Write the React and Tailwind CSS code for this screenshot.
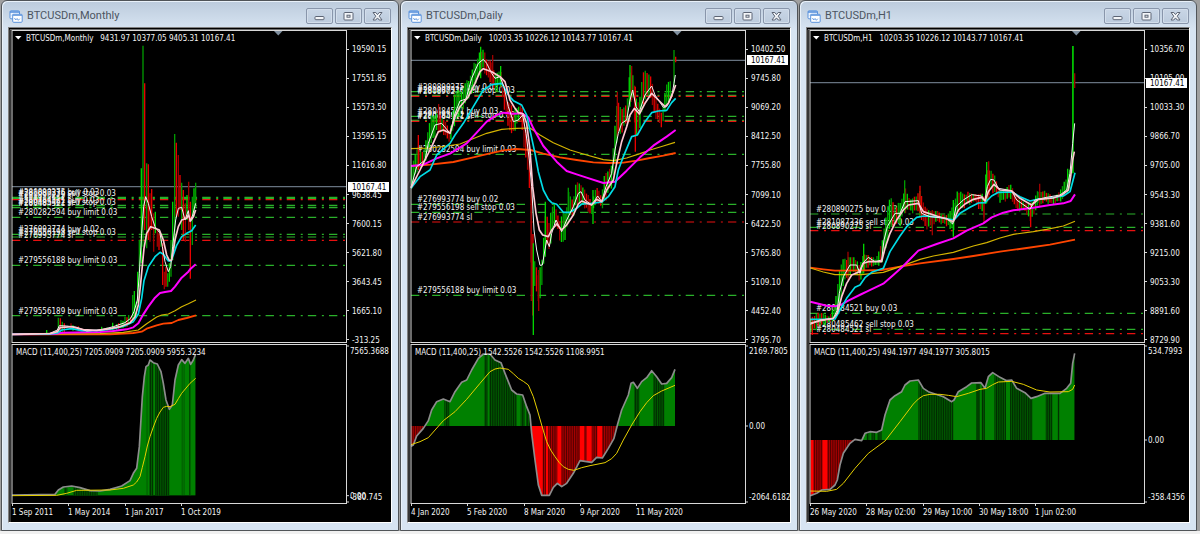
import { useId } from 'react';

// Traced points are stored in thirds of a pixel.
const UNIT = 1 / 3;

const COLORS = {
    green: '#2ab02a',
    red: '#e81010',
};

const BAR_COLORS = {
    up: ['#00d400', '#009a00'],
    down: ['#e80000', '#9b0000'],
};

const GRID_X = [12, 68, 125, 181, 237];

const CHARTS = [
    {
        id: 'monthly',
        title: 'BTCUSDm,Monthly',
        quote: '9431.97 10377.05 9405.31 10167.41',
        shift: 0,
        price: { y: 560, value: '10167.41' },
        scale: ['19590.15', '17551.85', '15573.50', '13595.15', '11616.80', '9638.45', '7600.15', '5621.80', '3643.45', '1665.10', '-313.25'],
        dates: ['1 Sep 2011', '1 May 2014', '1 Jan 2017', '1 Oct 2019'],
        orders: [
            { y: 592, label: '#280890275 buy 0.03', color: 'green' },
            { y: 595, label: '#281087336 sell stop 0.03', color: 'green' },
            { y: 599, label: '#280890275 sl', color: 'red' },
            { y: 616, label: '#280484521 buy 0.03', color: 'green' },
            { y: 622, label: '#280485462 sell stop 0.03', color: 'green' },
            { y: 623, label: '#280484521 sl', color: 'green' },
            { y: 652, label: '#280282594 buy limit 0.03', color: 'green' },
            { y: 703, label: '#276993774 buy 0.02', color: 'green' },
            { y: 711, label: '#279556198 sell stop 0.03', color: 'green' },
            { y: 721, label: '#276993774 sl', color: 'red' },
            { y: 796, label: '#279556188 buy limit 0.03', color: 'green' },
            { y: 947, label: '#279556189 buy limit 0.03', color: 'green' },
        ],
        bars: [
            [140, 990, 1003, 'up'], [175, 953, 1000, 'up'], [181, 955, 1000, 'down'], [187, 965, 1000, 'up'], [193, 970, 998, 'down'],
            [213, 970, 988, 'down'], [219, 976, 992, 'up'], [235, 978, 994, 'down'], [305, 980, 995, 'up'], [321, 982, 994, 'up'],
            [338, 968, 992, 'up'], [350, 972, 990, 'up'], [356, 970, 988, 'down'], [363, 960, 985, 'up'], [369, 962, 984, 'up'],
            [375, 950, 980, 'up'], [381, 952, 980, 'down'], [386, 945, 975, 'up'], [392, 950, 970, 'down'], [398, 885, 965, 'up'],
            [403, 873, 960, 'up'], [409, 905, 950, 'up'], [413, 815, 910, 'up'], [418, 720, 860, 'up'], [424, 505, 790, 'up'],
            [429, 137, 740, 'up'], [434, 250, 690, 'down'], [440, 490, 745, 'up'], [445, 493, 720, 'down'], [450, 580, 725, 'down'],
            [455, 567, 690, 'down'], [461, 640, 755, 'down'], [466, 635, 700, 'up'], [472, 690, 740, 'down'], [477, 700, 750, 'down'],
            [483, 700, 740, 'up'], [488, 730, 855, 'down'], [493, 815, 868, 'down'], [498, 800, 860, 'down'], [503, 820, 860, 'up'],
            [508, 790, 845, 'up'], [513, 720, 830, 'up'], [518, 605, 780, 'up'], [524, 402, 745, 'up'], [529, 428, 650, 'down'],
            [535, 465, 650, 'down'], [540, 525, 630, 'down'], [545, 548, 690, 'up'], [550, 570, 720, 'down'], [556, 610, 725, 'down'],
            [561, 585, 660, 'up'], [566, 545, 690, 'down'], [571, 605, 836, 'down'], [577, 590, 735, 'up'], [582, 565, 650, 'up'],
            [587, 548, 620, 'up'],
        ],
        averages: {
            white: '36,1003 150,1000 172,990 178,977 200,978 230,982 260,993 300,990 340,980 375,968 392,955 402,935 412,900 418,820 425,700 431,620 437,590 445,610 455,650 465,680 480,700 487,740 495,785 505,815 512,800 518,740 527,660 535,625 545,622 555,660 565,632 570,665 578,645 587,610',
            pink: '36,1003 150,1001 172,995 180,983 215,980 250,989 290,991 330,986 360,980 390,968 405,950 415,915 422,850 432,745 440,700 452,680 465,685 478,690 490,720 500,765 508,781 515,780 525,720 535,680 545,660 560,655 565,645 572,662 580,650 587,630',
            cyan: '36,1003 150,1002 172,999 185,990 215,986 245,992 300,991 340,986 375,977 400,965 415,942 425,895 432,842 445,800 455,785 465,770 480,757 490,763 505,783 513,783 520,765 530,736 545,710 560,700 575,692 587,675',
            magenta: '36,1003 160,1002 190,998 300,996 340,993 380,988 400,982 415,970 430,943 445,920 465,893 480,879 495,876 513,873 525,860 545,833 565,815 572,806 587,793',
            yellow: '36,1003 300,1001 370,997 415,990 440,971 470,951 485,945 505,942 525,932 545,920 565,911 588,900',
            orange: '36,1003 330,1003 400,999 425,995 440,986 470,976 490,971 515,969 535,960 560,954 588,946',
        },
        macd: {
            text: 'MACD (11,400,25) 7205.0909 7205.0909 5955.3234',
            max: '7565.3688',
            min: '-380.745',
            zero: 1487,
            outline: '36,1485 165,1483 175,1470 190,1461 215,1458 240,1463 270,1472 300,1473 330,1468 365,1458 390,1442 400,1420 410,1405 418,1340 427,1190 433,1130 438,1100 445,1095 450,1080 460,1088 472,1092 483,1115 490,1150 498,1200 508,1228 517,1215 525,1140 535,1095 545,1079 555,1090 565,1075 572,1093 580,1080 587,1062',
            signal: '36,1487 170,1486 200,1480 230,1471 330,1470 370,1465 400,1455 410,1446 420,1430 427,1402 435,1370 442,1338 450,1310 460,1281 470,1255 480,1236 490,1222 500,1219 510,1220 525,1213 535,1196 545,1180 570,1150 587,1135',
            falling: [[193, 202], [220, 293], [440, 442], [448, 460], [465, 508], [545, 547], [551, 553], [568, 572]],
        },
    },
    {
        id: 'daily',
        title: 'BTCUSDm,Daily',
        quote: '10203.35 10226.12 10143.77 10167.41',
        shift: 3,
        price: { y: 181, value: '10167.41' },
        scale: ['10402.50', '9745.80', '9069.20', '8412.50', '7755.80', '7099.10', '6422.50', '5765.80', '5109.10', '4452.40', '3795.70'],
        dates: ['4 Jan 2020', '5 Feb 2020', '8 Mar 2020', '9 Apr 2020', '11 May 2020'],
        orders: [
            { y: 275, label: '#280890275 buy 0.03', color: 'green' },
            { y: 286, label: '#281087336 sell stop 0.03', color: 'green' },
            { y: 289, label: '#280890275 sl', color: 'red' },
            { y: 349, label: '#280484521 buy 0.03', color: 'green' },
            { y: 361, label: '#280485462 sell stop 0.03', color: 'green' },
            { y: 364, label: '#280484521 sl', color: 'red' },
            { y: 463, label: '#280282594 buy limit 0.03', color: 'green' },
            { y: 613, label: '#276993774 buy 0.02', color: 'green' },
            { y: 637, label: '#279556198 sell stop 0.03', color: 'green' },
            { y: 666, label: '#276993774 sl', color: 'red' },
            { y: 886, label: '#279556188 buy limit 0.03', color: 'green' },
        ],
        range: [
            [35, 490, 570], [50, 430, 530], [70, 450, 500], [90, 340, 460], [110, 325, 400], [130, 350, 410], [150, 390, 430],
            [165, 270, 390], [185, 265, 335], [205, 230, 310], [225, 180, 270], [240, 140, 230], [250, 140, 215], [260, 170, 240],
            [275, 165, 265], [285, 220, 290], [300, 200, 260], [312, 235, 330], [325, 290, 400], [340, 330, 408], [360, 305, 360],
            [370, 330, 430], [380, 380, 510], [390, 440, 580], [395, 540, 900], [400, 730, 1003], [405, 770, 850], [415, 800, 930],
            [425, 780, 865], [437, 610, 760], [448, 650, 760], [460, 595, 690], [470, 620, 680], [480, 660, 735], [490, 620, 750],
            [500, 620, 700], [507, 565, 660], [520, 590, 660], [530, 535, 620], [540, 535, 620], [555, 570, 630], [575, 600, 650],
            [590, 555, 610], [605, 590, 630], [615, 500, 610], [635, 490, 570], [645, 340, 520], [652, 290, 420], [665, 310, 400],
            [680, 310, 380], [690, 200, 320], [700, 210, 300], [708, 260, 450], [718, 290, 400], [730, 210, 320], [750, 210, 290],
            [765, 290, 360], [785, 330, 385], [800, 250, 330], [815, 230, 290],
        ],
        bars: [
            [55, 405, 510, 'down'], [116, 312, 400, 'down'], [242, 140, 235, 'up'], [278, 165, 250, 'down'], [302, 198, 260, 'up'],
            [394, 560, 903, 'down'], [400, 730, 1005, 'up'], [416, 810, 933, 'down'], [436, 605, 770, 'up'], [505, 563, 660, 'up'],
            [579, 570, 672, 'up'], [652, 275, 410, 'down'], [690, 195, 320, 'up'], [695, 198, 300, 'down'], [706, 260, 455, 'down'],
            [822, 150, 260, 'up'], [827, 170, 187, 'down'],
        ],
        averages: {
            white: '33,563 50,500 75,480 85,430 105,375 125,370 150,400 165,340 180,303 198,297 215,235 235,190 250,178 260,190 275,220 285,235 300,230 312,260 325,320 340,365 355,360 368,345 378,400 388,480 395,560 402,690 410,750 420,796 427,795 440,720 448,740 455,700 468,660 485,695 500,660 520,620 535,580 543,575 555,600 575,615 593,588 605,605 618,560 635,520 645,450 655,400 665,370 680,360 690,300 698,270 708,320 718,335 735,285 755,258 765,285 790,322 800,320 815,290 822,250 826,225',
            pink: '33,563 50,530 75,480 95,440 115,395 130,390 150,400 165,350 180,320 205,290 225,250 240,215 250,206 275,215 300,230 315,245 330,300 345,325 355,338 370,342 380,370 390,450 398,560 408,640 418,690 428,705 445,710 455,690 470,672 485,690 500,675 520,645 535,612 545,603 575,615 590,598 605,605 620,570 640,540 650,490 665,425 680,380 690,345 703,325 718,342 735,310 755,280 775,300 795,320 805,310 820,275 827,255',
            cyan: '33,565 60,530 90,510 110,465 150,430 165,405 190,370 220,320 250,270 275,254 305,250 325,285 340,302 365,315 380,345 392,400 405,460 415,515 430,570 445,598 455,608 470,613 490,637 510,637 530,625 545,612 575,610 605,606 625,590 645,560 655,510 670,470 695,410 712,405 735,365 755,338 775,333 800,331 815,308 827,295',
            magenta: '33,498 70,494 110,475 150,461 200,430 230,398 260,365 290,345 310,338 340,341 365,340 385,352 400,385 430,438 470,485 500,513 530,523 560,533 610,549 645,545 680,512 720,472 760,437 800,410 827,390',
            yellow: '33,446 90,444 140,438 180,432 230,412 260,400 305,388 350,385 390,384 420,405 460,428 510,450 560,465 610,479 640,482 680,474 720,461 750,450 790,438 825,427',
            orange: '33,498 90,494 160,486 220,472 270,460 310,451 350,447 392,450 430,461 480,472 530,480 580,487 625,489 670,488 710,482 750,474 790,467 827,459',
        },
        macd: {
            text: 'MACD (11,400,25) 1542.5526 1542.5526 1108.9951',
            max: '2169.7805',
            min: '-2064.6182',
            zero: 1278,
            outline: '33,1339 40,1335 50,1308 70,1285 85,1262 95,1230 110,1205 130,1197 150,1205 165,1175 185,1147 200,1140 215,1110 235,1075 250,1062 270,1062 285,1080 303,1088 315,1120 335,1170 350,1182 368,1185 380,1220 390,1245 395,1300 405,1380 415,1455 425,1486 448,1486 460,1462 472,1450 485,1460 500,1450 520,1420 540,1382 575,1387 590,1372 607,1374 625,1345 642,1315 653,1272 665,1230 685,1185 693,1150 700,1147 712,1165 725,1145 740,1133 755,1112 770,1130 785,1152 800,1150 815,1133 825,1108',
            signal: '33,1334 60,1325 85,1313 130,1262 165,1235 200,1198 240,1150 270,1115 285,1107 300,1104 325,1108 340,1121 355,1135 370,1144 385,1155 400,1190 412,1230 425,1275 440,1325 452,1350 465,1370 478,1388 490,1400 505,1408 522,1411 545,1403 570,1397 615,1388 635,1376 650,1360 670,1320 695,1275 720,1235 740,1208 760,1187 785,1173 825,1156',
            falling: [[33, 72], [133, 148], [253, 263], [268, 350], [362, 374], [378, 392], [428, 438], [444, 472], [484, 540], [553, 560], [575, 592], [606, 653], [702, 718], [760, 793]],
        },
    },
    {
        id: 'h1',
        title: 'BTCUSDm,H1',
        quote: '10203.35 10226.12 10143.77 10167.41',
        shift: 6,
        price: { y: 248, value: '10167.41' },
        scale: ['10356.70', '10195.00', '10033.30', '9866.70', '9705.00', '9543.30', '9381.60', '9215.00', '9053.30', '8891.60', '8729.90'],
        dates: ['26 May 2020', '28 May 02:00', '29 May 10:00', '30 May 18:00', '1 Jun 02:00'],
        orders: [
            { y: 642, label: '#280890275 buy 0.03', color: 'green' },
            { y: 682, label: '#281087336 sell stop 0.03', color: 'green' },
            { y: 692, label: '#280890275 sl', color: 'red' },
            { y: 940, label: '#280484521 buy 0.03', color: 'green' },
            { y: 988, label: '#280485462 sell stop 0.03', color: 'green' },
            { y: 1001, label: '#280484521 sl', color: 'red' },
        ],
        range: [
            [33, 945, 1000], [60, 935, 985], [90, 945, 970], [105, 900, 960], [118, 790, 930], [135, 770, 850], [150, 760, 830],
            [165, 775, 820], [178, 790, 850], [190, 745, 830], [205, 760, 805], [225, 775, 800], [247, 720, 800], [258, 630, 760],
            [270, 590, 690], [290, 610, 680], [300, 600, 680], [314, 555, 640], [330, 590, 640], [345, 585, 640], [360, 570, 650],
            [375, 620, 690], [397, 620, 690], [410, 630, 670], [440, 640, 680], [460, 600, 700], [468, 575, 660], [480, 570, 640],
            [500, 575, 620], [525, 575, 610], [552, 580, 655], [560, 487, 610], [566, 490, 600], [575, 505, 580], [585, 525, 585],
            [600, 565, 610], [635, 550, 600], [650, 580, 640], [675, 610, 635], [690, 600, 670], [700, 590, 650], [717, 565, 620],
            [735, 570, 610], [760, 590, 615], [785, 560, 605], [800, 530, 580], [812, 490, 570],
        ],
        bars: [
            [37, 950, 1005, 'down'], [144, 755, 840, 'down'], [191, 731, 820, 'up'], [314, 541, 640, 'up'], [360, 557, 640, 'down'],
            [397, 630, 706, 'down'], [460, 600, 710, 'up'], [552, 590, 668, 'down'], [560, 486, 610, 'up'], [566, 484, 600, 'down'],
            [692, 610, 682, 'down'], [719, 551, 620, 'down'], [803, 506, 580, 'up'], [818, 138, 520, 'up'], [819, 138, 520, 'up'], [824, 220, 264, 'down'],
        ],
        averages: {
            white: '31,973 60,960 100,955 112,930 118,880 130,830 150,795 170,795 180,820 188,790 205,772 225,785 245,780 252,720 262,680 285,640 300,640 315,605 355,602 365,640 390,650 440,655 458,672 468,620 490,600 515,584 545,588 555,600 562,560 572,538 582,540 595,565 635,572 650,600 690,628 705,600 740,592 780,585 800,570 810,520 818,430 824,370',
            pink: '31,970 60,962 100,955 112,940 125,890 140,850 155,825 178,815 190,790 205,785 245,785 255,745 270,700 290,660 310,630 325,615 355,610 370,635 410,648 440,657 460,665 475,630 495,612 520,598 545,592 555,603 565,575 582,553 600,570 635,573 660,595 695,615 715,598 760,594 785,585 805,570 812,530 818,480 823,455',
            cyan: '31,958 105,957 120,930 140,895 165,862 180,855 195,833 215,817 250,805 270,755 300,708 320,680 350,652 372,648 400,650 430,654 462,660 480,640 510,622 535,609 555,608 575,588 595,577 635,576 660,590 690,603 715,597 750,594 790,588 810,575 818,545 825,518',
            magenta: '31,905 80,917 105,919 125,913 145,902 185,882 200,875 250,851 280,825 310,798 355,752 410,732 460,715 500,692 550,670 575,652 610,638 640,631 700,623 750,615 790,610 812,603 825,583',
            yellow: '31,804 70,816 105,824 185,824 220,820 250,817 300,800 360,778 400,768 460,757 520,738 560,728 600,714 640,703 700,695 740,688 790,678 825,664',
            orange: '31,803 70,808 105,812 200,811 245,810 300,800 360,790 460,777 520,768 600,755 680,744 750,734 825,719',
        },
        macd: {
            text: 'MACD (11,400,25) 494.1977 494.1977 305.8015',
            max: '534.7993',
            min: '-358.4356',
            zero: 1320,
            outline: '31,1487 50,1480 65,1470 90,1468 105,1455 112,1440 120,1395 130,1360 150,1330 165,1318 185,1322 195,1300 210,1295 230,1297 245,1290 255,1245 270,1200 285,1187 305,1175 315,1155 330,1143 355,1140 370,1165 385,1175 430,1190 455,1205 462,1200 475,1175 500,1160 515,1149 543,1148 555,1165 565,1130 578,1118 600,1132 620,1142 635,1140 650,1165 675,1178 693,1195 710,1190 735,1180 780,1180 800,1165 812,1150 818,1090 824,1060',
            signal: '31,1473 80,1474 110,1468 130,1450 165,1405 205,1360 255,1323 300,1265 340,1212 355,1197 370,1187 390,1183 420,1183 445,1186 470,1190 505,1180 540,1168 560,1165 578,1154 595,1146 635,1144 670,1153 710,1170 750,1176 805,1175 818,1168 824,1155',
            falling: [[40, 68], [82, 170], [200, 208], [214, 226], [232, 245], [355, 460], [528, 540], [545, 555], [583, 618], [630, 697], [737, 757], [773, 778]],
        },
    },
];

// Fills the gaps between the traced highs and lows with evenly spaced bars.
const spreadBars = (range = []) => {
    const bars = [];
    if (!range.length) return bars;
    const last = range[range.length - 1][0];
    let i = 0;
    let n = 0;
    for (let x = range[0][0]; x <= last; x += 5.35) {
        while (i < range.length - 2 && range[i + 1][0] < x) i++;
        const [x0, h0, l0] = range[i];
        const [x1, h1, l1] = range[i + 1];
        const t = Math.min(1, (x - x0) / (x1 - x0));
        const high = h0 + (h1 - h0) * t;
        const low = l0 + (l1 - l0) * t;
        const size = low - high;
        const a = Math.abs(Math.sin(n * 12.99 + x0)) * 0.2;
        const b = Math.abs(Math.sin(n * 7.23 + x1)) * 0.2;
        const trend = (h0 + l0 - h1 - l1) / 60;
        bars.push([x, high + size * a, low - size * b, trend + Math.sin(n * 2.7) > 0 ? 'up' : 'down']);
        n++;
    }
    return bars;
};

const WindowIcon = () => (
    <svg viewBox="0 0 14 13" className="w-[14px] h-[13px] shrink-0" aria-hidden="true">
        <rect x="1" y="0.8" width="9.5" height="8" rx="1" fill="#eef5ff" stroke="#5b93dc" />
        <path d="M1 2h9.500" stroke="#5b93dc" strokeWidth="1.600" />
        <path d="M3 5.500l1-1 1 1.500" stroke="#5b93dc" strokeWidth="0.800" fill="none" />
        <rect x="3.700" y="4.300" width="9.500" height="8" rx="1" fill="#fff" stroke="#5b93dc" />
        <path d="M3.700 5.300h9.500" stroke="#5b93dc" strokeWidth="1" />
        <path d="M5.500 8l1.200 2 1.400-1.500 1.200 1.800 1.500-1.600" stroke="#5b93dc" strokeWidth="0.900" fill="none" />
    </svg>
);

const GLYPHS = {
    Minimize: <rect x="2" y="5.500" width="9" height="3.200" rx="0.800" />,
    Restore: (
        <>
            <rect x="2" y="1.500" width="9" height="7.500" rx="0.800" />
            <rect x="5" y="4.200" width="3" height="2" />
        </>
    ),
    Close: <path d="M2 1.500h2.800L6.500 3.600 8.200 1.500H11L8.200 5.200 11 9H8.200L6.500 6.900 4.800 9H2l2.800-3.800z" />,
};

const WindowButton = ({ name }) => (
    <button
        aria-label={name}
        className="flex h-4 w-[27px] items-center justify-center rounded-xs border border-[#8996ab] bg-linear-to-b from-[#c9d6e6] to-[#bccbdd] shadow-[inset_0_0_0_1px_#d3deeb]"
    >
        <svg viewBox="0 0 13 11" className="h-[11px] w-[13px]" fill="#f4f6f9" stroke="#5c6474" aria-hidden="true">
            {GLYPHS[name]}
        </svg>
    </button>
);

const Histogram = ({ macd }) => {
    const id = useId();
    const first = macd.outline.split(',')[0];
    const last = macd.outline.split(' ').pop().split(',')[0];

    return (
        <g>
            <defs>
                <clipPath id={`${id}area`}>
                    <polygon points={`${first},${macd.zero} ${macd.outline} ${last},${macd.zero}`} />
                </clipPath>
                <pattern id={`${id}up`} width="5.300" height="10" patternUnits="userSpaceOnUse">
                    <rect width="5.300" height="10" fill="#006000" />
                    <rect width="3" height="10" fill="#002a00" />
                </pattern>
                <pattern id={`${id}down`} width="5.300" height="10" patternUnits="userSpaceOnUse">
                    <rect width="5.300" height="10" fill="#b00000" />
                    <rect width="2.800" height="10" fill="#500000" />
                </pattern>
            </defs>
            <g clipPath={`url(#${id}area)`}>
                <rect x="30" y="1032" width="1000" height={macd.zero - 1032} fill="#008000" />
                <rect x="30" y={macd.zero} width="1000" height={1510 - macd.zero} fill="#ff0000" />
                {macd.falling.map(([from, to]) => (
                    <g key={from}>
                        <rect x={from} y="1032" width={to - from} height={macd.zero - 1032} fill={`url(#${id}up)`} />
                        <rect x={from} y={macd.zero} width={to - from} height={1510 - macd.zero} fill={`url(#${id}down)`} />
                    </g>
                ))}
            </g>
            <polyline points={macd.outline} fill="none" stroke="#8c8c8c" strokeWidth="5" strokeLinejoin="round" />
            <polyline points={macd.signal} fill="none" stroke="#e6cf00" strokeWidth="3" />
        </g>
    );
};

const Chart = ({ chart }) => {
    const bars = [...spreadBars(chart.range), ...chart.bars];
    const { averages, macd, orders, price } = chart;
    const priceY = Math.round(price.y * UNIT);

    return (
        <svg
            viewBox="9 28 382 494"
            className="block h-auto w-full bg-black font-['DejaVu_Sans_Condensed','DejaVu_Sans',sans-serif] text-[8px]"
            fill="#f4f4f4"
            role="img"
            aria-label={chart.title}
        >
            {/* Order levels */}
            <g transform={`scale(${UNIT})`} strokeWidth="3.500">
                {orders.map(({ y, label, color }) => (
                    <path key={label} d={`M36 ${y}H1040`} stroke={COLORS[color]} strokeDasharray="25 17 6 15.400" />
                ))}
                <path d={`M36 ${price.y}H1040`} stroke="#66727f" />
            </g>
            {orders.map(({ y, label }) => (
                <text key={label} x="18" y={Math.round(y * UNIT) - 2}>{label}</text>
            ))}

            {/* Price bars and moving averages */}
            <g transform={`scale(${UNIT}) translate(${chart.shift} 0)`} fill="none" strokeLinejoin="round">
                {bars.map(([x, high, low, side], index) => (
                    <path key={index} d={`M${x} ${high}V${low}`} stroke={BAR_COLORS[side][index % 2]} strokeWidth="4" />
                ))}
                <polyline points={averages.orange} stroke="#ff4500" strokeWidth="5.500" />
                <polyline points={averages.yellow} stroke="#d4b400" strokeWidth="3.500" />
                <polyline points={averages.magenta} stroke="#ff00ff" strokeWidth="6" />
                <polyline points={averages.cyan} stroke="#00dce6" strokeWidth="5" />
                <polyline points={averages.white} stroke="#f4f4f4" strokeWidth="3" />
                <polyline points={averages.pink} stroke="#ffc8d2" strokeWidth="5" />
            </g>

            {/* MACD window */}
            <g transform={`scale(${UNIT}) translate(${chart.shift} 0)`}>
                <Histogram macd={macd} />
            </g>
            <text x="16" y="355">{macd.text}</text>

            {/* Frames and ticks */}
            <g fill="none" stroke="#d8d8d8">
                <rect x="12" y="30.500" width="334.500" height="312" />
                <rect x="12" y="344.500" width="334.500" height="159" />
                <path d="M10 522V29.500H391" stroke="#6b6b6b" />
                {chart.scale.map((value, index) => (
                    <path key={value} d={`M347 ${49.5 + index * 29}h2`} />
                ))}
                {chart.dates.map((date, index) => (
                    <path key={date} d={`M${GRID_X[index] + 0.5} 504v2`} />
                ))}
                <path d={`M347 ${macd.zero * UNIT}h2M347 346h2M347 502h2`} />
            </g>
            <path d="M274 31h8.500l-4.200 4.500z" fill="#8090a0" />
            <path d="M15 36h6.500l-3.200 3.500z" fill="#fff" />
            <text x="26" y="41">{`${chart.title}\u00a0\u00a0\u00a0${chart.quote}`}</text>

            {/* Scales */}
            {chart.scale.map((value, index) => (
                <text key={value} x="352" y={52 + index * 29 + (index > 4 ? 1 : 0)}>{value}</text>
            ))}
            <rect x="348" y={priceY - 5} width="41" height="10" fill="#fff" />
            <text x="352" y={priceY + 3} fill="#000">{price.value}</text>
            <text x="350" y="354">{macd.max}</text>
            <text x="350" y={Math.round(macd.zero * UNIT) + 3}>0.00</text>
            <text x="350" y="500">{macd.min}</text>
            {chart.dates.map((date, index) => (
                <text key={date} x={GRID_X[index]} y="515">{date}</text>
            ))}
        </svg>
    );
};

const ChartWindow = ({ chart }) => (
    <section className="ml-px rounded-t-md border border-[#505458] bg-[#d7e4f2] bg-linear-to-b from-[#bccbdc] to-[#d7e4f2] to-[28px] shadow-[inset_1px_1px_0_#e9f1f9]">
        <header className="flex h-[26px] items-center gap-1 px-[7px] pt-1">
            <WindowIcon />
            <h2 className="grow truncate font-['Roboto',sans-serif] text-[11px] leading-4 text-[#4c5561]">{chart.title}</h2>
            <div className="flex gap-[2px]">
                <WindowButton name="Minimize" />
                <WindowButton name="Restore" />
                <WindowButton name="Close" />
            </div>
        </header>
        <div className="mx-[6px] mb-[7px] border border-t-[#808080] border-r-white border-b-white border-l-[#808080]">
            <Chart chart={chart} />
        </div>
    </section>
);

export default function App() {
    return (
        <div className="bg-[#f0f0f0] pb-[3px]">
            <main className="grid grid-cols-3 bg-[#a0a0a0] pr-[3px]">
                {CHARTS.map((chart) => (
                    <ChartWindow key={chart.id} chart={chart} />
                ))}
            </main>
        </div>
    );
}
